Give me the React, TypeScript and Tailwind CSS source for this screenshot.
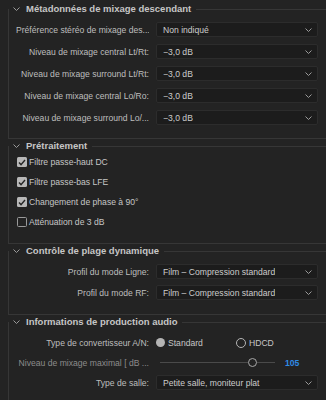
import React from 'react'

const font = "font-['Liberation_Sans','DejaVu_Sans',sans-serif]"

function Chevron({ className = '' }: { className?: string }) {
  return (
    <svg width="7" height="4" viewBox="0 0 7 4" className={className}>
      <polyline points="0.5,0.5 3.5,3.5 6.5,0.5" fill="none" stroke="#9a9a9a" strokeWidth="1" />
    </svg>
  )
}

function Section({ title, children }: { title: string; children: React.ReactNode }) {
  return (
    <fieldset className="ml-2 border-l border-t border-b border-[#363636]">
      <legend className="flex items-center pl-1 pr-[5px] h-[14px]">
        <Chevron />
        <span className="ml-[6px] text-[9.5px] font-bold text-[#c6c6c6]">{title}</span>
      </legend>
      {children}
    </fieldset>
  )
}

function Select({ value }: { value: string }) {
  return (
    <div className="flex-1 min-w-0 h-[15px] flex items-center justify-between pl-[6px] pr-[5px] rounded-[2px] bg-[#1c1c1c] border border-[#2c2c2c] text-[#cccccc]">
      <span className="truncate">{value}</span>
      <Chevron />
    </div>
  )
}

// labels are shown as the panel clips them, with the trailing "..."
function Row({ label, children, dim = false }: { label: string; children: React.ReactNode; dim?: boolean }) {
  return (
    <div className="flex items-center h-[15px] pl-[7px] pr-2 gap-[7px]">
      <span className={`w-[133px] shrink-0 whitespace-nowrap overflow-hidden text-right ${dim ? 'text-[#8c8c8c]' : 'text-[#bebebe]'}`}>{label}</span>
      {children}
    </div>
  )
}

function Check({ label, checked }: { label: string; checked: boolean }) {
  return (
    <div className="flex items-center h-[14px] pl-2 text-[#c6c6c6]">
      {checked ? (
        <span className="w-[10px] h-[10px] rounded-[1.5px] bg-[#b8b8b8] flex items-center justify-center">
          <svg width="8" height="7" viewBox="0 0 8 7">
            <polyline points="1,3.6 3,5.6 7,1" fill="none" stroke="#262626" strokeWidth="1.4" />
          </svg>
        </span>
      ) : (
        <span className="w-[10px] h-[10px] rounded-[1.5px] border border-[#9a9a9a]" />
      )}
      <span className="ml-[2px]">{label}</span>
    </div>
  )
}

export default function App() {
  return (
    <div className={`w-[326px] h-[400px] overflow-hidden bg-[#232323] text-[8.6px] leading-[12px] pt-[2px] ${font}`}>
      <Section title="Métadonnées de mixage descendant">
        <div className="flex flex-col gap-[7px] pt-[6px] pb-[13px]">
          <Row label="Préférence stéréo de mixage des...">
            <Select value="Non indiqué" />
          </Row>
          <Row label="Niveau de mixage central Lt/Rt:">
            <Select value="−3,0 dB" />
          </Row>
          <Row label="Niveau de mixage surround Lt/Rt:">
            <Select value="−3,0 dB" />
          </Row>
          <Row label="Niveau de mixage central Lo/Ro:">
            <Select value="−3,0 dB" />
          </Row>
          <Row label="Niveau de mixage surround Lo/...">
            <Select value="−3,0 dB" />
          </Row>
        </div>
      </Section>

      <Section title="Prétraitement">
        <div className="flex flex-col gap-[6px] pt-[2px] pb-[14px]">
          <Check label="Filtre passe-haut DC" checked />
          <Check label="Filtre passe-bas LFE" checked />
          <Check label="Changement de phase à 90°" checked />
          <Check label="Atténuation de 3 dB" checked={false} />
        </div>
      </Section>

      <Section title="Contrôle de plage dynamique">
        <div className="flex flex-col gap-[6px] pt-[6px] pb-[14px]">
          <Row label="Profil du mode Ligne:">
            <Select value="Film – Compression standard" />
          </Row>
          <Row label="Profil du mode RF:">
            <Select value="Film – Compression standard" />
          </Row>
        </div>
      </Section>

      <Section title="Informations de production audio">
        <div className="flex flex-col gap-[5px] pt-[6px] pb-[14px]">
          <Row label="Type de convertisseur A/N:">
            <div className="flex items-center text-[#c6c6c6]">
              <span className="w-[9px] h-[9px] rounded-full bg-[#b4b4b4]" />
              <span className="ml-[3px] w-[68px]">Standard</span>
              <span className="w-[10px] h-[10px] rounded-full border-[1.5px] border-[#b4b4b4]" />
              <span className="ml-[3px]">HDCD</span>
            </div>
          </Row>
          <Row label="Niveau de mixage maximal [ dB ..." dim>
            <div className="flex items-center ml-[4px]">
              <div className="flex items-center w-[115px]">
                <div className="h-px w-[88px] bg-[#4a4a4a]" />
                <span className="w-[9px] h-[9px] rounded-full border-[1.5px] border-[#a8a8a8] bg-[#232323]" />
                <div className="h-px flex-1 bg-[#4a4a4a]" />
              </div>
              <span className="ml-[10px] font-bold text-[#2f8be6]">105</span>
            </div>
          </Row>
          <Row label="Type de salle:">
            <Select value="Petite salle, moniteur plat" />
          </Row>
        </div>
      </Section>
    </div>
  )
}
